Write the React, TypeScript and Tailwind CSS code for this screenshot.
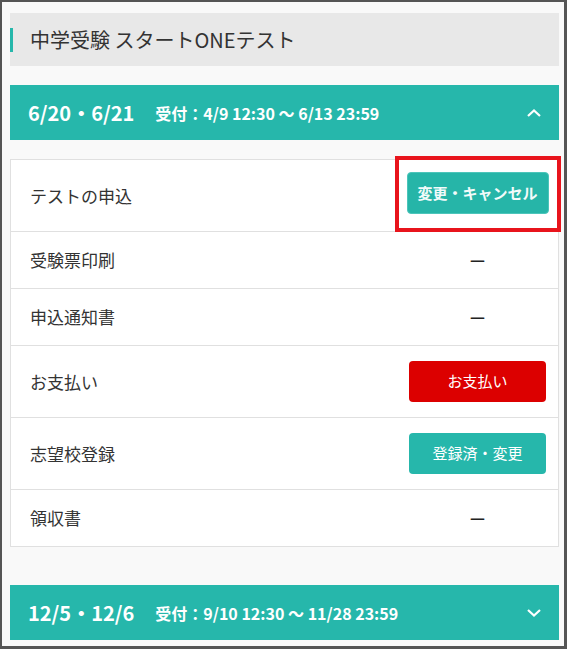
import React from "react";

const font = { fontFamily: '"Noto Sans CJK JP", "Noto Sans", sans-serif' };

const Chevron = ({ up }: { up?: boolean }) => (
  <svg width="14" height="8" viewBox="0 0 14 8" className="shrink-0">
    <polyline
      points={up ? "1,7 7,1.5 13,7" : "1,1 7,6.5 13,1"}
      fill="none"
      stroke="#ffffff"
      strokeWidth="2.2"
    />
  </svg>
);

const SessionHeader = ({ date, period, open }: { date: string; period: string; open?: boolean }) => (
  <div className="flex items-center h-[55px] bg-[#26b7ab] pl-[18px] pr-[18px] text-white">
    <span className="text-[20px] font-bold leading-none">{date}</span>
    <span className="ml-[21px] text-[16px] font-bold leading-none">{period}</span>
    <span className="ml-auto">
      <Chevron up={open} />
    </span>
  </div>
);

const Dash = () => <span className="text-[17px] text-[#222] leading-none">ー</span>;

const App = () => {
  return (
    <div
      style={font}
      className="w-[567px] h-[649px] bg-[#f9f9f9] border-l-2 border-t-2 border-r-[3px] border-b-[3px] border-[#555555] pl-[8px] pr-[5px] pt-[11px] overflow-hidden"
    >
      {/* タイトル */}
      <div className="flex items-center h-[53px] bg-[#e8e8e8]">
        <div className="w-[3px] h-[24px] bg-[#26b7ab]" />
        <p className="ml-[17px] text-[20px] text-[#333333] leading-none">中学受験 スタートONEテスト</p>
      </div>

      <div className="mt-[19px]">
        <SessionHeader date="6/20・6/21" period="受付：4/9 12:30 〜 6/13 23:59" open />
      </div>

      {/* 手続き一覧 */}
      <div className="mt-[19px] bg-white border border-[#e0e0e0] text-[#333333] text-[17px]">
        <div className="relative flex items-center justify-between h-[71px] pl-[19px]">
          <span>テストの申込</span>
          <div className="w-[137px] mr-[12px] flex justify-center -mt-[5px]">
            <button className="w-[142px] h-[42px] shrink-0 rounded-[4px] bg-[#26b5a8] border border-[#4cc5ba] text-[15px] font-bold text-[#f2fbfa]">
              変更・キャンセル
            </button>
          </div>
          <div className="absolute right-[-3px] top-[-4px] w-[166px] h-[76px] border-4 border-[#e8141c] z-10 pointer-events-none" />
        </div>
        <div className="flex items-center justify-between h-[57px] pl-[19px] border-t border-[#e0e0e0]">
          <span>受験票印刷</span>
          <div className="w-[137px] mr-[12px] flex justify-center">
            <Dash />
          </div>
        </div>
        <div className="flex items-center justify-between h-[57px] pl-[19px] border-t border-[#e0e0e0]">
          <span>申込通知書</span>
          <div className="w-[137px] mr-[12px] flex justify-center">
            <Dash />
          </div>
        </div>
        <div className="flex items-center justify-between h-[72px] pl-[19px] border-t border-[#e0e0e0]">
          <span>お支払い</span>
          <div className="w-[137px] mr-[12px] flex justify-center">
            <button className="w-[137px] h-[41px] rounded-[4px] bg-[#dc0000] text-[15px] text-white">お支払い</button>
          </div>
        </div>
        <div className="flex items-center justify-between h-[72px] pl-[19px] border-t border-[#e0e0e0]">
          <span>志望校登録</span>
          <div className="w-[137px] mr-[12px] flex justify-center">
            <button className="w-[137px] h-[41px] rounded-[4px] bg-[#26b7ab] text-[15px] text-white">登録済・変更</button>
          </div>
        </div>
        <div className="flex items-center justify-between h-[57px] pl-[19px] border-t border-[#e0e0e0]">
          <span>領収書</span>
          <div className="w-[137px] mr-[12px] flex justify-center">
            <Dash />
          </div>
        </div>
      </div>

      <div className="mt-[38px]">
        <SessionHeader date="12/5・12/6" period="受付：9/10 12:30 〜 11/28 23:59" />
      </div>
    </div>
  );
};

export default App;
